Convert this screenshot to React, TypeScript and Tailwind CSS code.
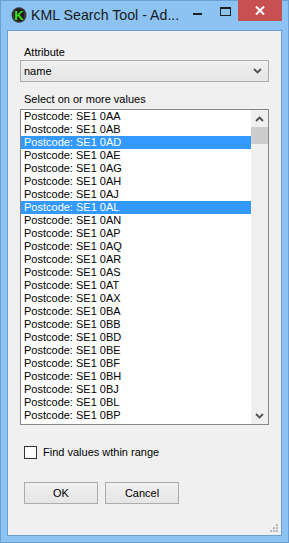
const items = [
  "0AA", "0AB", "0AD", "0AE", "0AG", "0AH", "0AJ", "0AL", "0AN", "0AP", "0AQ", "0AR",
  "0AS", "0AT", "0AX", "0BA", "0BB", "0BD", "0BE", "0BF", "0BH", "0BJ", "0BL", "0BP",
];
const selected = ["0AD", "0AL"];

function Chevron({ up = false }: { up?: boolean }) {
  return (
    <svg width="9" height="6" viewBox="0 0 9 6" className={up ? "rotate-180" : ""}>
      <path d="M1 1 L4.5 4.5 L8 1" fill="none" stroke="#505050" strokeWidth="1.8" />
    </svg>
  );
}

export default function App() {
  return (
    <div
      className="flex h-[543px] w-[289px] flex-col border border-[#6b9fd3] bg-[#8cc3f3] text-[11px] text-black"
      style={{ fontFamily: '"Liberation Sans", Arial, sans-serif' }}
    >
      {/* Title bar */}
      <div className="flex h-[29px] items-start">
        <div className="ml-[10px] mt-[6px]">
          <svg width="16" height="16" viewBox="0 0 16 16">
            <ellipse cx="8" cy="8" rx="7.5" ry="7.8" fill="#3a3a3a" />
            <ellipse cx="8" cy="8" rx="5.2" ry="6.6" fill="#1d1d1d" />
            <text x="8" y="13" textAnchor="middle" fontSize="13" fontWeight="bold" fill="#39e020" fontFamily="Liberation Sans, Arial, sans-serif">K</text>
          </svg>
        </div>
        <div className="ml-[4px] mt-[6px] text-[14.2px] leading-[17px] text-[#1a1a1a]">
          KML Search Tool - Ad...
        </div>
        <div className="ml-auto flex items-start">
          <div className="mr-[18px] mt-[12px] h-[2px] w-[9px] bg-[#1e1e1e]" />
          <div className="mr-[7px] mt-[6px] h-[9px] w-[11px] border border-t-2 border-[#1e1e1e]" />
          <div className="-mt-px mr-[6px] flex h-[21px] w-[44px] items-center justify-center bg-[#c75050]">
            <svg width="10" height="9" viewBox="0 0 10 9">
              <path d="M1 0.5 L9 8.5 M9 0.5 L1 8.5" stroke="#fff" strokeWidth="2" />
            </svg>
          </div>
        </div>
      </div>

      {/* Client area */}
      <div className="relative mx-[6px] mb-[6px] flex flex-1 flex-col border border-[#6b9fd3] bg-[#f0f0f0] px-[12px]">
        <div className="mt-[15px] pl-[4px] leading-[13px]">Attribute</div>

        <div className="mt-px flex h-[22px] items-center border border-[#acacac] bg-gradient-to-b from-[#f0f0f0] to-[#e5e5e5] pl-[3px] pr-[6px]">
          <span className="leading-[13px]">name</span>
          <span className="ml-auto">
            <Chevron />
          </span>
        </div>

        <div className="mt-[11px] pl-[4px] leading-[13px]">Select on or more values</div>

        <div className="mt-[3px] flex h-[316px] border border-[#828790] bg-white">
          <div className="flex-1 overflow-hidden">
            {items.map((code) => (
              <div
                key={code}
                className={
                  selected.includes(code)
                    ? "h-[13px] bg-[#3399ff] pl-[3px] leading-[13px] text-white"
                    : "h-[13px] pl-[3px] leading-[13px]"
                }
              >
                Postcode: SE1 {code}
              </div>
            ))}
          </div>
          <div className="flex w-[17px] flex-col bg-[#f0f0f0]">
            <div className="flex h-[17px] items-center justify-center">
              <Chevron up />
            </div>
            <div className="h-[17px] bg-[#cdcdcd]" />
            <div className="mt-auto flex h-[17px] items-center justify-center">
              <Chevron />
            </div>
          </div>
        </div>

        <div className="mt-[21px] flex items-center pl-[4px]">
          <div className="h-[13px] w-[13px] border border-[#333333] bg-white" />
          <span className="ml-[6px] leading-[13px]">Find values wthin range</span>
        </div>

        <div className="mt-[23px] flex gap-[7px] pl-[4px]">
          <button className="h-[22px] w-[74px] border border-[#acacac] bg-gradient-to-b from-[#f0f0f0] to-[#e5e5e5] text-[11px] leading-[13px]">
            OK
          </button>
          <button className="h-[22px] w-[74px] border border-[#acacac] bg-gradient-to-b from-[#f0f0f0] to-[#e5e5e5] text-[11px] leading-[13px]">
            Cancel
          </button>
        </div>

        {/* Resize grip */}
        <div className="absolute bottom-[3px] right-[3px] grid grid-cols-3 gap-px">
          <span className="h-[2px] w-[2px]" />
          <span className="h-[2px] w-[2px]" />
          <span className="h-[2px] w-[2px] bg-[#b8b8b8]" />
          <span className="h-[2px] w-[2px]" />
          <span className="h-[2px] w-[2px] bg-[#b8b8b8]" />
          <span className="h-[2px] w-[2px] bg-[#b8b8b8]" />
          <span className="h-[2px] w-[2px] bg-[#b8b8b8]" />
          <span className="h-[2px] w-[2px] bg-[#b8b8b8]" />
          <span className="h-[2px] w-[2px] bg-[#b8b8b8]" />
        </div>
      </div>
    </div>
  );
}
